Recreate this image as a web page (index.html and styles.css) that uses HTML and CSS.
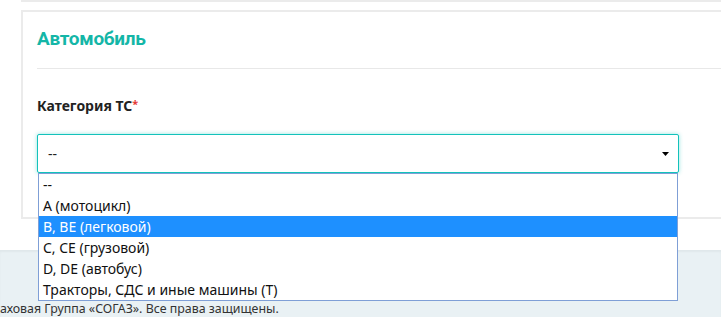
FILE: index.html
```html
<!DOCTYPE html>
<html lang="ru">
<head>
<meta charset="utf-8">
<title>Автомобиль</title>
<link rel="stylesheet" href="styles.css">
</head>
<body>
<div class="main">
  <div class="prev-card"></div>
  <section class="card">
    <h2 class="card-title">Автомобиль</h2>
    <div class="card-body">
      <div class="field">
        <label class="field-label">Категория ТС<span class="req">*</span></label>
        <div class="select-wrap">
          <div class="select">
            <span class="select-value">--</span>
            <svg class="select-arrow" width="7" height="4" viewBox="0 0 7 4"><path d="M0 0H7L3.5 4Z" fill="#000"/></svg>
          </div>
          <ul class="dropdown">
            <li class="option">--</li>
            <li class="option">A (мотоцикл)</li>
            <li class="option selected">B, BE (легковой)</li>
            <li class="option">C, CE (грузовой)</li>
            <li class="option">D, DE (автобус)</li>
            <li class="option">Тракторы, СДС и иные машины (Т)</li>
          </ul>
        </div>
      </div>
    </div>
  </section>
</div>
<footer class="footer">
  <p class="copyright">аховая Группа «СОГАЗ». Все права защищены.</p>
</footer>
</body>
</html>
```
FILE: styles.css
```css
html, body {
  margin: 0;
  padding: 0;
}
body {
  font-family: "Noto Sans", "Open Sans", sans-serif;
  color: #222;
  background: #fff;
  overflow: hidden;
}
.main {
  height: 250px;
  padding-left: 21px;
  box-sizing: border-box;
  background: #fff;
}
.prev-card {
  height: 2px;
  background: #ebebeb;
  margin-right: -10px;
}
.card {
  margin-top: 8px;
  margin-right: -10px;
  border: 2px solid #ebebeb;
  background: #fff;
  height: 209px;
  box-sizing: border-box;
}
.card-title {
  margin: 0 0 0 14px;
  padding: 15px 0 17px;
  font-family: Roboto, "Noto Sans", sans-serif;
  font-size: 19px;
  line-height: 24px;
  font-weight: 700;
  color: #14b6a7;
  border-bottom: 1px solid #e8e8e8;
  letter-spacing: -0.3px;
}
.card-body {
  padding: 27px 0 0 14px;
}
.field-label {
  display: block;
  font-size: 14px;
  line-height: 20px;
  font-weight: 700;
  color: #222;
}
.req {
  color: #e53935;
  font-size: 11px;
  vertical-align: top;
  line-height: 16px;
}
.select-wrap {
  position: relative;
  margin-top: 18px;
  width: 642px;
}
.select {
  height: 39px;
  box-sizing: border-box;
  border: 1px solid #13c2bb;
  border-radius: 2px;
  box-shadow: 0 0 4px rgba(19, 194, 187, 0.45);
  display: flex;
  align-items: center;
  justify-content: space-between;
  padding: 0 9px 0 10px;
  background: #fff;
  font-size: 14px;
  color: #222;
}
.select-arrow {
  display: block;
  margin-top: 1px;
}
.dropdown {
  position: absolute;
  left: 1px;
  top: 39px;
  width: 640px;
  box-sizing: border-box;
  margin: 0;
  padding: 0;
  list-style: none;
  border: 1px solid #7f9fd6;
  background: #fff;
  z-index: 5;
}
.option {
  height: 21px;
  line-height: 21px;
  padding-left: 4px;
  font-size: 14px;
  color: #111;
  white-space: nowrap;
}
.option.selected {
  background: #1e90ff;
  color: #fff;
}
.footer {
  height: 67px;
  background: #e9f1f4;
  box-shadow: inset 0 2px 2px rgba(0, 0, 0, 0.04);
  padding-top: 51px;
  box-sizing: border-box;
}
.copyright {
  margin: 0;
  font-size: 12.4px;
  line-height: 16px;
  color: #333;
}
```
